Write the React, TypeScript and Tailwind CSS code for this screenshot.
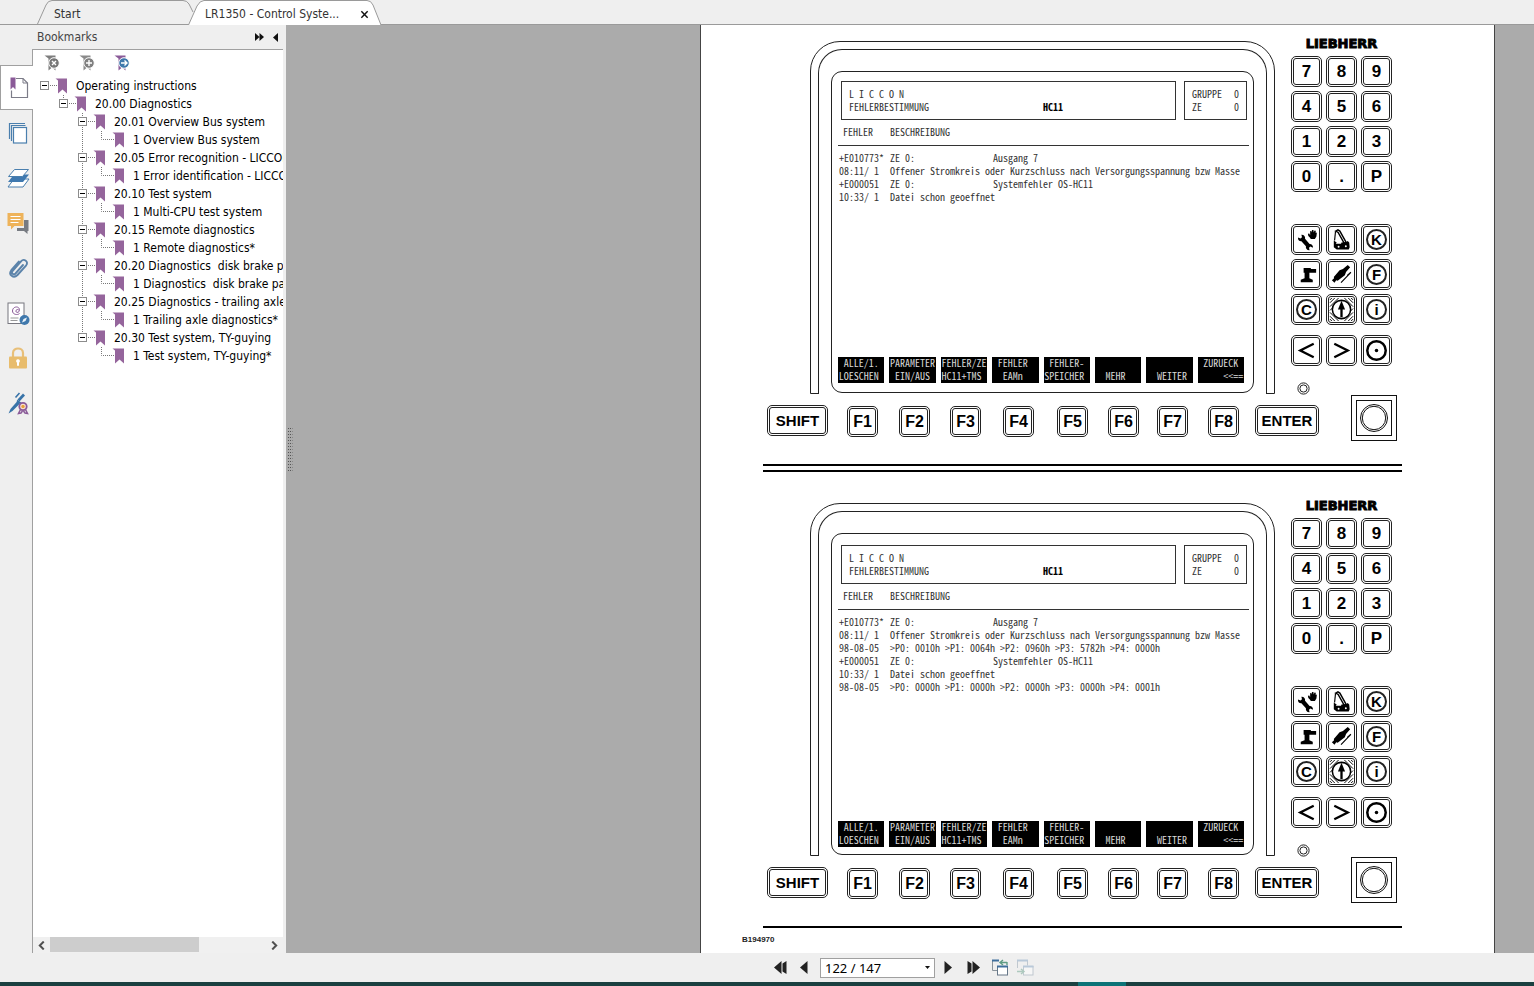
import React from "react";

const UI = "font-['DejaVu_Sans_Condensed','Noto_Sans',sans-serif]";
const ARIAL = "font-['Liberation_Sans',Arial,sans-serif]";
const TERM =
  "font-['Noto_Sans_Mono_CJK_JP','Noto_Sans_Mono_CJK_SC','Liberation_Mono',monospace] text-[10px] leading-[13px] whitespace-pre";

/* ---------- tabs ---------- */

function Tabs() {
  return (
    <header className="relative flex h-[25px] shrink-0 border-b border-[#9a9a9a] bg-[#efefef] pl-[37px]">
      <button className="relative h-[25px] w-[157px] text-left">
        <svg className="absolute left-0 top-0" width="157" height="24" viewBox="0 0 157 24" fill="none" aria-hidden="true">
          <path d="M0.5 24 L9 5 Q11 0.5 15 0.5 H146 Q150 0.5 152 4 L156 12" stroke="#9a9a9a" />
        </svg>
        <span className="relative block pl-[17px] pt-[3px] text-[12px] leading-[18px] text-[#333]">Start</span>
      </button>
      <button className="relative -ml-[6px] h-[25px] w-[194px] text-left">
        <svg className="absolute left-0 top-0" width="194" height="25" viewBox="0 0 194 25" aria-hidden="true">
          <path d="M0.5 25 L9 6 Q12 0.5 16 0.5 H179 Q183 0.5 185 5 L193 25" fill="#fff" stroke="#9a9a9a" />
        </svg>
        <span className="relative flex items-center pl-[17px] pt-[3px] text-[12px] leading-[18px] text-[#333]">
          <span className="w-[155px]">LR1350 - Control Syste...</span>
          <svg width="9" height="9" viewBox="0 0 10 10" stroke="#111" strokeWidth="1.6" fill="none" aria-hidden="true">
            <path d="M1.5 1.5l7 7M8.5 1.5l-7 7" />
          </svg>
        </span>
      </button>
    </header>
  );
}

/* ---------- rail ---------- */

function RailIcon({ name }: { name: string }) {
  const p = { width: 24, height: 24, viewBox: "0 0 24 24", fill: "none" };
  switch (name) {
    case "Bookmarks":
      return (
        <svg {...p}>
          <path d="M10 2.500h7l4.500 4.500v14.500h-16v-7" stroke="#7c7c88" strokeWidth="1.200" />
          <path d="M17 2.500v4.500h4.500" stroke="#7c7c88" />
          <path d="M4.500 1.500h5v12l-2.500-2.500-2.500 2.500z" fill="#8a5a98" />
        </svg>
      );
    case "Pages":
      return (
        <svg {...p} stroke="#4a7fae" strokeWidth="1.200">
          <path d="M3.500 18v-15.500h15.500M5.500 20v-15.500h14" />
          <rect x="7.500" y="6.500" width="13" height="15.500" fill="#fff" />
        </svg>
      );
    case "Layers":
      return (
        <svg {...p}>
          <path d="M8 13h15l-6 8h-15z" fill="#fff" stroke="#4a7fae" />
          <path d="M8 8.500h15l-6 7.500h-15z" fill="#3f79b0" />
          <path d="M8.500 3.500h14l-6 7h-14z" fill="#fff" stroke="#4a7fae" />
        </svg>
      );
    case "Comments":
      return (
        <svg {...p}>
          <path d="M18 9h4.500v11h-1v3l-3.500-3h-7v-3h7z" fill="#777b82" />
          <path d="M1.500 2h16v13h-9l-3.500 3.500v-3.500h-3.500z" fill="#eeb35a" />
          <path d="M4.500 5.500h10M4.500 8.500h10M4.500 11.500h8" stroke="#fff" strokeWidth="1.200" />
        </svg>
      );
    case "Attachments":
      return (
        <svg {...p}>
          <path
            d="M17 9l-7.500 8.500c-2 2-4.800-.2-3-2.500l8.500-9.700c3-3.300 8 .3 5.200 4l-8.700 9.700c-4 4-9.500-.3-6.200-4.800l7.500-8.700"
            stroke="#5b83aa"
            strokeWidth="1.900"
            strokeLinecap="round"
          />
        </svg>
      );
    case "Signatures":
      return (
        <svg {...p}>
          <rect x="2" y="2" width="16" height="20.500" fill="#fff" stroke="#77777f" />
          <path d="M13.500 12.500c-2 2-7 1-7-2.500 0-5 7.500-5.500 7-.5-.5 2.500-4 2.500-3.500.3.400-1.800 2-1.500 3-.5" stroke="#8a5a98" />
          <path d="M4.500 17h8M4.500 19.500h7" stroke="#999" />
          <circle cx="18.500" cy="19" r="5" fill="#3f78ac" />
          <path d="M21 16.500l-3.500 1.500-1.500 3.500 3.500-1.500z" fill="#e8f1f8" />
        </svg>
      );
    case "Security":
      return (
        <svg {...p}>
          <path d="M7 11v-4c0-6 10-6 10 0v4" stroke="#e8bf78" strokeWidth="2.200" />
          <rect x="3" y="10.500" width="18" height="12" rx="1" fill="#e8bc6c" />
          <path d="M12 13.200a1.900 1.900 0 0 1 1 3.500v3h-2v-3a1.900 1.900 0 0 1 1-3.500z" fill="#fff" />
        </svg>
      );
    default:
      return (
        <svg {...p}>
          <path d="M2.500 22.500l2-4.500 7-8 2.500 2.500-7.500 7.500z" fill="#3873a8" />
          <path d="M11.500 8.500l5.500-6 2 2-5.500 6z" fill="#3873a8" />
          <path d="M9.500 6.500l4-4.500M11 9.500l4 3" stroke="#3873a8" strokeWidth="1.600" />
          <circle cx="17" cy="15.500" r="3.700" fill="#fbe3d3" stroke="#8a5a98" strokeWidth="1.800" />
          <circle cx="17" cy="15.500" r="1.700" fill="#e6a03c" />
          <path d="M14.500 18.500l-2 4 2.500-.5 1.500-2M19.500 18.500l2 4-2.500-.5-1.500-2" stroke="#8a5a98" strokeWidth="1.500" />
        </svg>
      );
  }
}

const rail = ["Bookmarks", "Pages", "Layers", "Comments", "Attachments", "Signatures", "Security", "Certificates"];

function Rail() {
  return (
    <nav className="flex w-[33px] shrink-0 flex-col border-r border-[#a0a0a0] bg-[#efefef] pt-4">
      {rail.map((n, i) => (
        <button
          key={n}
          aria-label={n}
          className={
            i === 0
              ? "-mr-px flex h-[45px] items-center justify-center border-y border-l border-[#a0a0a0] bg-white pl-px"
              : "flex h-[45px] items-center justify-center pl-1"
          }
        >
          <RailIcon name={n} />
        </button>
      ))}
    </nav>
  );
}

/* ---------- bookmark tree ---------- */

const tree: [number, string][] = [
  [0, "Operating instructions"],
  [1, "20.00 Diagnostics"],
  [2, "20.01 Overview Bus system"],
  [3, "1 Overview Bus system"],
  [2, "20.05 Error recognition - LICCON"],
  [3, "1 Error identification - LICCON"],
  [2, "20.10 Test system"],
  [3, "1 Multi-CPU test system"],
  [2, "20.15 Remote diagnostics"],
  [3, "1 Remote diagnostics*"],
  [2, "20.20 Diagnostics  disk brake pa"],
  [3, "1 Diagnostics  disk brake pad"],
  [2, "20.25 Diagnostics - trailing axle"],
  [3, "1 Trailing axle diagnostics*"],
  [2, "20.30 Test system, TY-guying"],
  [3, "1 Test system, TY-guying*"],
];

function Gutter({ level, index }: { level: number; index: number }) {
  const x = 7 + level * 19;
  const dots = { stroke: "#777", strokeDasharray: "1 1" };
  const last = index >= tree.length - 2;
  return (
    <svg width={level * 19 + 43} height="18" className="shrink-0" fill="none" aria-hidden="true">
      {level === 3 && !last && <path d="M49.500 0V18" {...dots} />}
      {level === 2 && <path d={last ? "M49.500 0V9" : "M49.500 0V18"} {...dots} />}
      {level === 3 ? (
        <path d={`M${x + 4.5} 0V8.500H${x + 17}`} {...dots} />
      ) : (
        <>
          {level === 1 && <path d={`M${x + 4.5} 0V5`} {...dots} />}
          <path d={`M${x + 10} 8.500h7`} {...dots} />
          <rect x={x + 0.5} y="4.500" width="8" height="8" fill="#fff" stroke="#8c8c8c" />
          <path d={`M${x + 2} 8.500h5`} stroke="#000" />
        </>
      )}
      <path d={`M${x + 15.5} 1.500h11.500v15l-4.500-4-4.500 4v-13z`} fill="#95659c" />
    </svg>
  );
}

function MarkIcon({ color, badge, glyph }: { color: string; badge: string; glyph: string }) {
  return (
    <svg width="16" height="17" viewBox="0 0 16 17" fill="none" aria-hidden="true">
      <path d="M0.500 0.500h11v15l-3.500-3-3.500 3v-12z" fill={color} />
      <circle cx="10" cy="8" r="5.300" fill={badge} stroke="#fff" />
      <path d={glyph} stroke="#fff" strokeWidth="1.400" />
    </svg>
  );
}

function Sidebar() {
  return (
    <aside className="flex w-[286px] shrink-0 flex-col bg-[#efefef]">
      <div className="flex h-6 shrink-0 items-center pl-[37px] pr-2 text-[12px] text-[#444]">
        <h2 className="flex-1">Bookmarks</h2>
        <button aria-label="Options" className="mr-[9px]">
          <svg width="9" height="8" viewBox="0 0 9 8" aria-hidden="true">
            <path d="M0 0l4.500 4-4.500 4zM4.500 0l4.500 4-4.500 4z" fill="#111" />
          </svg>
        </button>
        <button aria-label="Collapse panel">
          <svg width="5" height="9" viewBox="0 0 5 9" aria-hidden="true">
            <path d="M5 0v9l-5-4.500z" fill="#111" />
          </svg>
        </button>
      </div>
      <div className="flex min-h-0 flex-1">
        <Rail />
        <div className="mr-[3px] flex min-w-0 flex-1 flex-col border-t border-[#a0a0a0] bg-white">
          <div className="flex h-[27px] shrink-0 items-center gap-[19px] pl-[11px]">
            <button aria-label="Delete bookmark">
              <MarkIcon color="#7d7d7d" badge="#777" glyph="M8 6l4 4M12 6l-4 4" />
            </button>
            <button aria-label="Add bookmark">
              <MarkIcon color="#8a8a8a" badge="#808080" glyph="M10 5v6M7 8h6" />
            </button>
            <button aria-label="Go to bookmark">
              <MarkIcon color="#8a5a98" badge="#3f78ac" glyph="M7 8h5.500M10.500 5.500l2.500 2.500-2.500 2.500" />
            </button>
          </div>
          <ul className="min-h-0 flex-1 overflow-hidden">
            {tree.map(([level, label], i) => (
              <li key={label} className="flex h-[18px] items-center whitespace-pre text-[12px] leading-[18px] text-black">
                <Gutter level={level} index={i} />
                {label}
              </li>
            ))}
          </ul>
          <div className="flex h-4 shrink-0 items-center bg-[#f0f0f0]">
            <button aria-label="Scroll left" className="flex w-[17px] justify-center">
              <svg width="7" height="9" viewBox="0 0 6 8" fill="none" aria-hidden="true">
                <path d="M5 0.500l-3.500 3.500 3.500 3.500" stroke="#505050" strokeWidth="1.800" />
              </svg>
            </button>
            <div className="flex h-full flex-1">
              <div className="h-[15px] w-[69%] bg-[#cdcdcd]" />
            </div>
            <button aria-label="Scroll right" className="flex w-[17px] justify-center">
              <svg width="7" height="9" viewBox="0 0 6 8" fill="none" aria-hidden="true">
                <path d="M1 0.500l3.500 3.500-3.500 3.500" stroke="#505050" strokeWidth="1.800" />
              </svg>
            </button>
          </div>
        </div>
      </div>
    </aside>
  );
}

/* ---------- document page ---------- */

function Key({ label, children, wide }: { label: string; children: React.ReactNode; wide?: string }) {
  return (
    <button aria-label={label} className={`${wide ?? "w-[31px]"} flex h-[31px] rounded-[5px] border border-[#222] bg-white p-px`}>
      <span className="flex h-full w-full items-center justify-center rounded-[3px] border border-[#222]">{children}</span>
    </button>
  );
}

function Ring({ children }: { children: React.ReactNode }) {
  return (
    <span className="flex size-[21px] items-center justify-center rounded-full border-2 border-[#222] text-[15px] font-bold leading-none">
      {children}
    </span>
  );
}

const icon = { width: 25, height: 25, viewBox: "0 0 26 26", "aria-hidden": true } as const;

const symbols: [string, React.ReactNode][] = [
  [
    "Service",
    <svg {...icon} fill="#000">
      <path d="M14.500 7l1.300-.3 1 1.800v-4l1.200-.7.500 2 .3-2.600 1.400-.1.300 2.500.8-2 1.300.3v2.300l1.200-.4-.5 4.200-1.600 2.500h-4.200l-1-1.500-1.600-1.700z" />
      <path d="M4.200 10.800l2.600 1.200 1.500-1.300-.6-2.700c2.600-.2 4.300 2 3.800 4.200l4.700 5.400c2.200-.2 4 1.700 3.400 4l-2.500-1.300-1.500 1.200.6 2.700c-2.600.2-4.300-1.800-3.800-4.100l-4.700-5.400c-2.200.2-4-1.700-3.500-3.900z" />
    </svg>,
  ],
  [
    "Crane",
    <svg {...icon} fill="none">
      <path d="M7 4.200l2.300-1.200 2 1.200 6.700 12-2 1-6.500-11.500z" stroke="#000" strokeWidth="1.500" />
      <path d="M6.800 4.500l-1 9.500" stroke="#000" strokeWidth="1.200" />
      <path d="M5 14l3 2-1 1.500h5.500l.5-1.500 5-.5 1.500-1 1.500 1.500.5 5-1 2.500h-12.500l-3-2.500v-2.500z" fill="#000" />
      <circle cx="10" cy="20.500" r="1" fill="#fff" />
      <circle cx="17.500" cy="20" r="1" fill="#fff" />
    </svg>,
  ],
  ["K", <Ring>K</Ring>],
  [
    "Support",
    <svg {...icon} fill="#000">
      <path d="M10 6.300h7.500v1h5.500v4h-7v5.500l3.500 1.700v2.500h-12.500v-2.500l4-1.700v-5.500h-1z" />
    </svg>,
  ],
  [
    "Telescope",
    <svg {...icon} fill="#000">
      <path d="M19.500 3.200l2.500 2.300-4.300 5-1.200 3.300-7.500 5.700-1.500-.5-1.800 2.500-2.700-2.500 2.300-2 -.3-1.500 6-7 3.500-1.300z" />
      <path d="M12.500 21.500l10-10.500M19 14l3.800-3.300" stroke="#000" strokeWidth="1.200" />
    </svg>,
  ],
  ["F", <Ring>F</Ring>],
  ["C", <Ring>C</Ring>],
  [
    "Load",
    <svg {...icon} fill="none" stroke="#000">
      <path
        d="M1 6l5-5M1 10l9-9M1 3l2-2M1 14l3-3M20 25l5-5M16 25l9-9M23 25l2-2M22 15l3-3M20 1l5 5M16 1l9 9M23 1l2 2M1 20l5 5M1 16l9 9M1 23l2 2"
        strokeWidth="1"
      />
      <circle cx="13" cy="13" r="9.500" fill="#fff" strokeWidth="1.600" />
      <path d="M13 21v-10" strokeWidth="2.400" />
      <path d="M13 4l3.700 9h-7.400z" fill="#000" stroke="none" />
    </svg>,
  ],
  ["i", <Ring>i</Ring>],
];

const arrows: [string, React.ReactNode][] = [
  [
    "Left",
    <svg {...icon} fill="none">
      <path d="M20.500 6l-14 7 14 7" stroke="#000" strokeWidth="2.400" />
    </svg>,
  ],
  [
    "Right",
    <svg {...icon} fill="none">
      <path d="M5.500 6l14 7-14 7" stroke="#000" strokeWidth="2.400" />
    </svg>,
  ],
  [
    "Centre",
    <svg {...icon} fill="none">
      <circle cx="13" cy="13" r="9.600" stroke="#000" strokeWidth="2.600" />
      <circle cx="13" cy="13" r="1.800" fill="#000" />
    </svg>,
  ],
];

const softKeys = [
  " ALLE/1. \nLOESCHEN ",
  "PARAMETER\n EIN/AUS ",
  "FEHLER/ZE\nHC11+TMS ",
  " FEHLER  \n  EAMn   ",
  " FEHLER- \nSPEICHER ",
  "         \n  MEHR   ",
  "         \n  WEITER ",
  " ZURUECK \n     <<==",
];

const digits = ["7", "8", "9", "4", "5", "6", "1", "2", "3", "0", ".", "P"];
const fKeys = ["F1", "F2", "F3", "F4", "F5", "F6", "F7", "F8"];

type Line = [string, string, string?];

function Screen({ lines, low }: { lines: Line[]; low?: boolean }) {
  return (
    <div
      className={`${TERM} ${low ? "pb-[7px] pt-[11px]" : "pb-[9px] pt-[9px]"} ml-3 mt-[21px] flex h-[322px] w-[423px] flex-col rounded-[11px] border border-[#222] pl-[6px] pr-1 text-[#333]`}
    >
      <div className="flex justify-between pl-[3px] pr-[2px]">
        <div className="h-[39px] w-[335px] border border-[#333] pl-[7px] pt-[5px]">
          <div>L I C C O N</div>
          <div className="flex">
            <span className="w-[194px]">FEHLERBESTIMMUNG</span>
            <span className="font-bold text-black">HC11</span>
          </div>
        </div>
        <div className="h-[39px] w-[63px] border border-[#333] px-[7px] pt-[5px]">
          <div className="flex justify-between">
            <span>GRUPPE</span>
            <span>0</span>
          </div>
          <div className="flex justify-between">
            <span>ZE</span>
            <span>0</span>
          </div>
        </div>
      </div>
      <div className="mt-[5px] grid grid-cols-[47px_1fr] border-b border-[#333] pb-[7px] pl-[5px]">
        <span>FEHLER</span>
        <span>BESCHREIBUNG</span>
      </div>
      <div className="mt-[5px] pl-px">
        {lines.map(([a, b, c], i) => (
          <div key={i} className="flex">
            <span className="w-[51px]">{a}</span>
            <span className={c ? "w-[103px]" : ""}>{b}</span>
            {c && <span>{c}</span>}
          </div>
        ))}
      </div>
      <div className="mt-auto grid grid-cols-8 gap-[5px] pr-[5px]">
        {softKeys.map((k) => (
          <div key={k} className="flex h-[26px] items-end justify-center bg-black pb-px text-[#d8d8d8]">
            {k}
          </div>
        ))}
      </div>
    </div>
  );
}

function Panel({ lines, low }: { lines: Line[]; low?: boolean }) {
  return (
    <section className={ARIAL}>
      <div className="flex h-[370px] items-start pl-[109px]">
        <div className="mt-4 h-[353px] w-[465px] rounded-t-[30px] border border-[#222] px-[7px] pt-[7px]">
          <div className="-mb-px h-[345px] rounded-t-[24px] border border-b-0 border-[#222] bg-white">
            <Screen lines={lines} low={low} />
          </div>
        </div>
        <div className="ml-[16px] pt-3">
          <div className="w-[101px] text-center font-['DejaVu_Sans',sans-serif] text-[13px] font-bold leading-[14px] text-black [-webkit-text-stroke:1px_black]">
            LIEBHERR
          </div>
          <div className="mt-[5px] grid grid-cols-[31px_31px_31px] gap-1 text-[17px] font-bold leading-none">
            {digits.map((d) => (
              <Key key={d} label={d}>
                {d}
              </Key>
            ))}
          </div>
          <div className="mt-8 grid grid-cols-[31px_31px_31px] gap-1">
            {symbols.map(([n, s]) => (
              <Key key={n} label={n}>
                {s}
              </Key>
            ))}
          </div>
          <div className="mt-[10px] grid grid-cols-[31px_31px_31px] gap-1">
            {arrows.map(([n, s]) => (
              <Key key={n} label={n}>
                {s}
              </Key>
            ))}
          </div>
          <svg className="ml-[6px] mt-4" width="13" height="13" viewBox="0 0 13 13" fill="none" stroke="#222" aria-hidden="true">
            <circle cx="6.500" cy="6.500" r="5.600" />
            <circle cx="6.500" cy="6.500" r="3.600" />
          </svg>
        </div>
      </div>
      <div className="grid grid-cols-[80px_52px_51px_53px_54px_51px_49px_51px_47px_96px_46px] pl-[66px] text-[16px] font-bold leading-none">
        <div className="pt-[10px]">
          <Key label="Shift" wide="w-[61px]">
            <span className="text-[15px]">SHIFT</span>
          </Key>
        </div>
        {fKeys.map((f) => (
          <div key={f} className="pt-[11px]">
            <Key label={f}>{f}</Key>
          </div>
        ))}
        <div className="pt-[10px]">
          <Key label="Enter" wide="w-[64px]">
            <span className="text-[15px]">ENTER</span>
          </Key>
        </div>
        <svg width="46" height="47" viewBox="0 0 46 47" fill="none" stroke="#111" aria-hidden="true">
          <rect x="0.500" y="0.500" width="45" height="45" />
          <rect x="5.500" y="5.500" width="35" height="35" />
          <circle cx="23" cy="23" r="13.500" />
          <circle cx="23" cy="23" r="11.700" />
        </svg>
      </div>
    </section>
  );
}

const first: Line[] = [
  ["+E010773*", "ZE 0:", "Ausgang 7"],
  ["08:11/ 1", "Offener Stromkreis oder Kurzschluss nach Versorgungsspannung bzw Masse"],
  ["+E000051", "ZE 0:", "Systemfehler OS-HC11"],
  ["10:33/ 1", "Datei schon geoeffnet"],
];

const second: Line[] = [
  first[0],
  first[1],
  ["98-08-05", ">P0: 0010h >P1: 0064h >P2: 0960h >P3: 5782h >P4: 0000h"],
  first[2],
  first[3],
  ["98-08-05", ">P0: 0000h >P1: 0000h >P2: 0000h >P3: 0000h >P4: 0001h"],
];

function Viewer() {
  return (
    <main className="flex min-w-0 flex-1 items-stretch justify-between overflow-hidden bg-[#ababab]">
      <div className="flex items-center pb-[77px] pl-[2px]">
        <svg width="6" height="45" viewBox="0 0 6 45" stroke="#555" strokeDasharray="1 2" aria-hidden="true">
          <path d="M0.500 0v45M2.500 0v45" />
          <path d="M4.500 0v45" stroke="#888" />
        </svg>
      </div>
      <article className="mr-[39px] w-[795px] shrink-0 border-x border-[#444] bg-white">
        <Panel lines={first} />
        <div className="ml-[62px] mt-[22px] h-2 w-[639px] border-y-2 border-black" />
        <div className="pt-[15px]">
          <Panel lines={second} low />
        </div>
        <div className="ml-[62px] mt-[22px] w-[639px] border-t-2 border-black" />
        <p className={`${ARIAL} ml-[41px] mt-[7px] text-[8px] font-bold leading-[10px] text-[#222]`}>B194970</p>
      </article>
    </main>
  );
}

/* ---------- page navigation ---------- */

function PageBar() {
  return (
    <footer className="shrink-0">
      <div className="flex h-[29px] items-center justify-center bg-[#efefef] pl-[274px]">
        <button aria-label="First page" className="mr-[13px]">
          <svg width="13" height="13" viewBox="0 0 13 13" fill="#222" aria-hidden="true">
            <path d="M7.500 0v13l-7.500-6.500zM12.500 0v13l-4-2.500v-8z" />
          </svg>
        </button>
        <button aria-label="Previous page" className="mr-3">
          <svg width="8" height="13" viewBox="0 0 8 13" fill="#222" aria-hidden="true">
            <path d="M7.500 0v13l-7.500-6.500z" />
          </svg>
        </button>
        <div className="flex h-5 w-[115px] items-center border border-[#a0a0a0] bg-white">
          <input
            aria-label="Page"
            defaultValue="122 / 147"
            className="w-24 flex-1 bg-transparent pl-1 font-['Noto_Sans',sans-serif] text-[13px] leading-[18px] text-black outline-none"
          />
          <button aria-label="Choose page" className="px-1">
            <svg width="5" height="3" viewBox="0 0 5 3" aria-hidden="true">
              <path d="M0 0h5l-2.500 3z" fill="#111" />
            </svg>
          </button>
        </div>
        <button aria-label="Next page" className="ml-[9px]">
          <svg width="8" height="13" viewBox="0 0 8 13" fill="#222" aria-hidden="true">
            <path d="M0.500 0v13l7.500-6.500z" />
          </svg>
        </button>
        <button aria-label="Last page" className="ml-[15px]">
          <svg width="13" height="13" viewBox="0 0 13 13" fill="#222" aria-hidden="true">
            <path d="M5.500 0v13l7.500-6.500zM0.500 0v13l4-2.500v-8z" />
          </svg>
        </button>
        <button aria-label="Previous view" className="ml-3">
          <svg width="17" height="17" viewBox="0 0 17 17" fill="none" aria-hidden="true">
            <path d="M0.500 1v10.500h5" stroke="#8a949c" />
            <path d="M0 1.500h7" stroke="#3f6f9c" strokeWidth="2" />
            <rect x="5.500" y="7.500" width="10" height="8.500" fill="#fff" stroke="#667788" />
            <path d="M5 7.500h11" stroke="#3f6f9c" strokeWidth="2" />
            <path d="M8 3.500h7M11 1l-3 2.500 3 2.500M15 3v3" stroke="#5f9c84" strokeWidth="1.400" />
          </svg>
        </button>
        <button aria-label="Next view" className="ml-2">
          <svg width="17" height="17" viewBox="0 0 17 17" fill="none" opacity="0.450" aria-hidden="true">
            <path d="M0.500 9v-7.500h10v5" stroke="#8899aa" />
            <path d="M0 1.500h11" stroke="#7a9cc0" strokeWidth="2" />
            <rect x="6.500" y="7.500" width="9.500" height="8.500" fill="#fff" stroke="#8899aa" />
            <path d="M6 7.500h10.500" stroke="#7a9cc0" strokeWidth="2" />
            <path d="M0 12.500h6M4 10l3 2.500-3 2.500" stroke="#5f9c84" strokeWidth="1.400" />
          </svg>
        </button>
      </div>
      <div className="flex h-1 bg-[#1a4040]">
        <div className="ml-[70.3%] w-12 bg-[#0d7377]" />
      </div>
    </footer>
  );
}

export default function App() {
  return (
    <div className={`${UI} flex h-screen flex-col overflow-hidden bg-[#efefef]`}>
      <Tabs />
      <div className="flex min-h-0 flex-1">
        <Sidebar />
        <Viewer />
      </div>
      <PageBar />
    </div>
  );
}
